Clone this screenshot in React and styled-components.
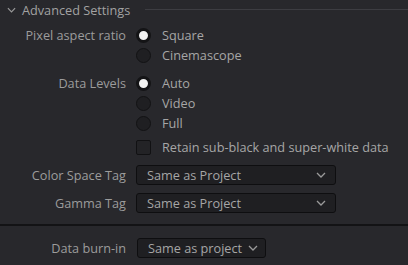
import React from 'react'
import styled, { createGlobalStyle } from 'styled-components'

const Global = createGlobalStyle`
  html, body {
    margin: 0;
    padding: 0;
    background: #28282c;
  }
  body {
    font-family: "Open Sans", "Noto Sans", sans-serif;
    font-size: 12.7px;
    color: #9c9c9c;
  }
`

const Panel = styled.div`
  width: 408px;
  height: 265px;
  background: #28282c;
  overflow: hidden;
`

const Header = styled.div`
  display: flex;
  align-items: center;
  height: 20px;
  padding-left: 7px;
  gap: 6px;
  color: #a2a2a2;
`

const HeaderLine = styled.div`
  flex: 1;
  height: 1px;
  background: #3d3d42;
  margin-left: 9px;
  margin-top: -2px;
`

const Body = styled.div`
  display: grid;
  grid-template-columns: 126px 1fr;
  column-gap: 10px;
  row-gap: 8px;
  padding-top: 5px;
`

const Label = styled.div`
  text-align: right;
  line-height: 20px;
  height: 20px;
  white-space: nowrap;
`

const Stack = styled.div`
  display: flex;
  flex-direction: column;
`

const Option = styled.div`
  display: flex;
  align-items: center;
  height: 20px;
  margin-top: ${p => p.$gap || 0}px;
  gap: 11px;
  color: #a6a6a6;
  white-space: nowrap;
`

const Radio = styled.span`
  box-sizing: border-box;
  width: 15px;
  height: 15px;
  border-radius: 50%;
  background: ${p => (p.$on ? '#f2f2f2' : '#1f1f22')};
  border: ${p => (p.$on ? '3px solid #141416' : '1px solid #121214')};
  flex: none;
`

const Check = styled.span`
  box-sizing: border-box;
  width: 15px;
  height: 15px;
  border-radius: 2px;
  background: #232326;
  border: 1px solid #111113;
  flex: none;
`

const Select = styled.div`
  box-sizing: border-box;
  display: flex;
  align-items: center;
  justify-content: ${p => (p.$tight ? 'flex-start' : 'space-between')};
  gap: 6px;
  width: ${p => p.$w}px;
  height: 20px;
  padding: 0 9px 0 10px;
  background: #1f1f22;
  border: 1px solid #0e0e10;
  border-radius: 3px;
  color: #a6a6a6;
  white-space: nowrap;
`

const Separator = styled.div`
  height: 2px;
  background: #131315;
  margin: 11px 0 12px;
`

const Footer = styled.div`
  display: grid;
  grid-template-columns: 126px 1fr;
  column-gap: 11px;
`

const Chevron = ({ w = 10 }) => (
  <svg width={w} height="6" viewBox="0 0 10 6" style={{ flex: 'none' }}>
    <path d="M1 1 L5 5 L9 1" fill="none" stroke="#9a9a9a" strokeWidth="1.3" />
  </svg>
)

export default function App() {
  return (
    <Panel>
      <Global />
      <Header>
        <Chevron w={9} />
        <span>Advanced Settings</span>
        <HeaderLine />
      </Header>
      <Body>
        <Label>Pixel aspect ratio</Label>
        <Stack>
          <Option><Radio $on />Square</Option>
          <Option><Radio />Cinemascope</Option>
        </Stack>

        <Label>Data Levels</Label>
        <Stack>
          <Option><Radio $on />Auto</Option>
          <Option><Radio />Video</Option>
          <Option><Radio />Full</Option>
          <Option $gap={4}><Check />Retain sub-black and super-white data</Option>
        </Stack>

        <Label>Color Space Tag</Label>
        <Select $w={200}>Same as Project<Chevron /></Select>

        <Label>Gamma Tag</Label>
        <Select $w={200}>Same as Project<Chevron /></Select>
      </Body>
      <Separator />
      <Footer>
        <Label>Data burn-in</Label>
        <Select $w={129} $tight>Same as project<Chevron /></Select>
      </Footer>
    </Panel>
  )
}
